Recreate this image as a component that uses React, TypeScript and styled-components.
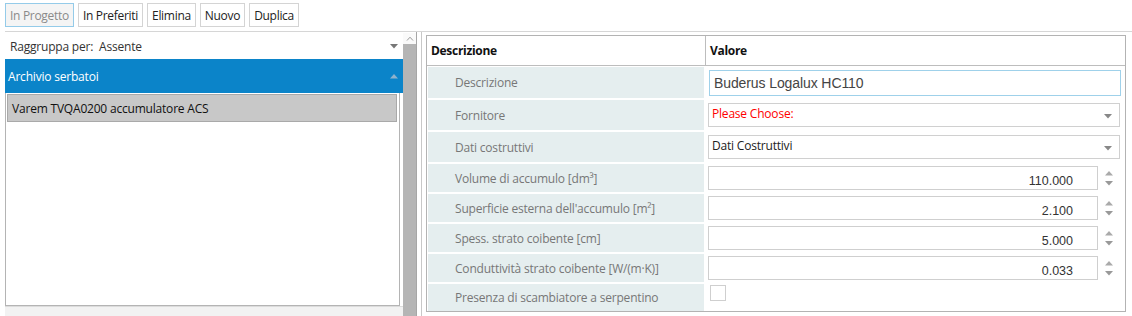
import React from 'react';
import styled, { createGlobalStyle } from 'styled-components';

const Global = createGlobalStyle`
  html, body { margin: 0; padding: 0; background: #fff; }
  body {
    font-family: "Open Sans", "Noto Sans", sans-serif;
    font-size: 12px;
    letter-spacing: -0.2px;
    color: #222;
  }
  * { box-sizing: border-box; }
`;

const Page = styled.div`
  width: 1132px;
  height: 316px;
  display: flex;
  flex-direction: column;
  overflow: hidden;
`;

const Toolbar = styled.div`
  display: flex;
  gap: 4px;
  height: 31px;
  padding: 3px 0 0 5px;
`;

const ToolButton = styled.button<{ $active?: boolean }>`
  height: 24px;
  padding: 0 4px;
  font: inherit;
  letter-spacing: -0.3px;
  background: ${p => (p.$active ? '#f4f4f4' : '#fff')};
  border: 1px solid ${p => (p.$active ? '#94cbe9' : '#d4d4d4')};
  color: ${p => (p.$active ? '#8a8a8a' : '#222')};
  border-radius: 0;
  cursor: pointer;
`;

const Main = styled.div`
  flex: 1;
  min-height: 0;
  display: flex;
  margin-left: 5px;
  border-top: 1px solid #d6d6d6;
`;

const LeftPane = styled.div`
  width: 398px;
  display: flex;
  flex-direction: column;
  padding-top: 1px;
`;

const GroupSelect = styled.div`
  height: 26px;
  display: flex;
  align-items: center;
  justify-content: space-between;
  padding: 0 5px 0 4px;
  margin-left: 1px;
  background: #fff;
  color: #333;
`;

const GroupHeader = styled.div`
  height: 34px;
  display: flex;
  align-items: center;
  justify-content: space-between;
  padding: 0 5px 0 3px;
  background: #0b84c9;
  color: #fff;
`;

const ListArea = styled.div`
  flex: 1;
  margin-right: 3px;
  padding: 1px;
  border: 1px solid #b4b4b4;
  border-top: none;
  background: #fff;
`;

const ListItem = styled.div`
  height: 28px;
  display: flex;
  align-items: center;
  padding-left: 4px;
  margin-right: 1px;
  background: #c8c8c8;
  border: 1px solid #a9a9a9;
  color: #111;
`;

const ListFooter = styled.div`
  height: 10px;
  background: #f2f2f2;
  border-top: 1px solid #dcdcdc;
`;

const Scrollbar = styled.div`
  width: 13px;
  display: flex;
  flex-direction: column;
  padding-top: 1px;
`;

const ScrollUp = styled.div`
  height: 11px;
  display: flex;
  align-items: center;
  justify-content: center;
  background: #fafafa;
`;

const ScrollThumb = styled.div`
  flex: 1;
  background: #b5b5b5;
`;

const Splitter = styled.div`
  width: 10px;
  border-left: 1px solid #a6a6a6;
  background: linear-gradient(to right, transparent 4px, #c8c8c8 4px, #c8c8c8 5px, transparent 5px);
`;

const RightPane = styled.div`
  width: 700px;
  margin: 3px 0 4px;
  border: 1px solid #b3b3b3;
  display: flex;
  flex-direction: column;
`;

const HeaderRow = styled.div`
  height: 30px;
  display: flex;
  border-bottom: 1px solid #bdbdbd;
`;

const HeaderCell = styled.div<{ $first?: boolean }>`
  width: ${p => (p.$first ? '279px' : 'auto')};
  flex: ${p => (p.$first ? 'none' : '1')};
  display: flex;
  align-items: center;
  padding-left: 4px;
  font-weight: 700;
  letter-spacing: -0.3px;
  color: #111;
  border-right: ${p => (p.$first ? '1px solid #bdbdbd' : 'none')};
`;

const Rows = styled.div`
  display: flex;
  flex-direction: column;
  gap: 2px;
  padding: 1px 1px 0;
`;

const Row = styled.div<{ $h: number }>`
  height: ${p => p.$h}px;
  display: flex;
`;

const LabelCell = styled.div`
  width: 276px;
  display: flex;
  align-items: center;
  padding-left: 27px;
  background: #e5eeef;
  color: #777;
`;

const ValueCell = styled.div<{ $top?: boolean }>`
  flex: 1;
  display: flex;
  align-items: ${p => (p.$top ? 'flex-start' : 'center')};
  padding: 0 3px 0 4px;
`;

const TextInput = styled.div`
  flex: 1;
  height: 26px;
  margin-left: 1px;
  display: flex;
  align-items: center;
  padding-left: 4px;
  border: 1px solid #9fd1ea;
  font-family: "Liberation Sans", Arial, sans-serif;
  font-size: 14px;
  letter-spacing: -0.1px;
  color: #444;
`;

const SelectBox = styled.div<{ $placeholder?: boolean }>`
  flex: 1;
  height: 24px;
  margin-right: 1px;
  display: flex;
  align-items: flex-start;
  justify-content: space-between;
  padding: 1px 7px 0 3px;
  border: 1px solid #d0d0d0;
  color: ${p => (p.$placeholder ? '#ff0000' : '#222')};
`;

const Caret = styled.span`
  align-self: center;
  display: flex;
  margin-top: 2px;
`;

const NumberWrap = styled.div`
  flex: 1;
  display: flex;
  align-items: center;
  gap: 3px;
  margin-right: 4px;
`;

const NumberInput = styled.div`
  flex: 1;
  height: 24px;
  display: flex;
  align-items: flex-end;
  justify-content: flex-end;
  padding: 0 24px 0 0;
  border: 1px solid #cfcfcf;
  font-family: "Liberation Sans", Arial, sans-serif;
  font-size: 12.5px;
  letter-spacing: 0;
  line-height: 15px;
  color: #333;
`;

const Spinner = styled.div`
  width: 16px;
  display: flex;
  flex-direction: column;
  align-items: center;
  gap: 5px;
`;

const CheckBox = styled.div`
  width: 16px;
  height: 16px;
  margin: 1px 0 0 2px;
  border: 1px solid #cfcfcf;
  background: #fff;
`;

const Down = ({ color = '#777' }: { color?: string }) => (
  <svg width="8" height="5" viewBox="0 0 8 5"><path d="M0 0 H8 L4 4.5 Z" fill={color} /></svg>
);
const Up = ({ color = '#777' }: { color?: string }) => (
  <svg width="8" height="5" viewBox="0 0 8 5"><path d="M0 4.5 H8 L4 0 Z" fill={color} /></svg>
);
const Chevron = () => (
  <svg width="8" height="5" viewBox="0 0 8 5"><path d="M1 4.5 L4 1.2 L7 4.5" fill="none" stroke="#9a9a9a" strokeWidth="1" /></svg>
);

type Field =
  | { kind: 'text'; label: string; value: string; h: number }
  | { kind: 'select'; label: string; value: string; placeholder?: boolean; h: number }
  | { kind: 'number'; label: string; value: string; h: number }
  | { kind: 'check'; label: string; h: number };

const fields: Field[] = [
  { kind: 'text', label: 'Descrizione', value: 'Buderus Logalux HC110', h: 31 },
  { kind: 'select', label: 'Fornitore', value: 'Please Choose:', placeholder: true, h: 30 },
  { kind: 'select', label: 'Dati costruttivi', value: 'Dati Costruttivi', h: 30 },
  { kind: 'number', label: 'Volume di accumulo [dm³]', value: '110.000', h: 28 },
  { kind: 'number', label: "Superficie esterna dell'accumulo [m²]", value: '2.100', h: 28 },
  { kind: 'number', label: 'Spess. strato coibente [cm]', value: '5.000', h: 28 },
  { kind: 'number', label: 'Conduttività strato coibente [W/(m·K)]', value: '0.033', h: 28 },
  { kind: 'check', label: 'Presenza di scambiatore a serpentino', h: 27 },
];

const renderValue = (f: Field) => {
  switch (f.kind) {
    case 'text':
      return <TextInput>{f.value}</TextInput>;
    case 'select':
      return (
        <SelectBox $placeholder={f.placeholder}>
          <span>{f.value}</span>
          <Caret><Down color="#888" /></Caret>
        </SelectBox>
      );
    case 'number':
      return (
        <NumberWrap>
          <NumberInput>{f.value}</NumberInput>
          <Spinner>
            <Up color="#aaa" />
            <Down color="#999" />
          </Spinner>
        </NumberWrap>
      );
    case 'check':
      return <CheckBox />;
  }
};

export default function App() {
  return (
    <Page>
      <Global />
      <Toolbar>
        <ToolButton $active>In Progetto</ToolButton>
        <ToolButton>In Preferiti</ToolButton>
        <ToolButton>Elimina</ToolButton>
        <ToolButton>Nuovo</ToolButton>
        <ToolButton>Duplica</ToolButton>
      </Toolbar>
      <Main>
        <LeftPane>
          <GroupSelect>
            <span>Raggruppa per:&nbsp; Assente</span>
            <Down color="#777" />
          </GroupSelect>
          <GroupHeader>
            <span>Archivio serbatoi</span>
            <Up color="#8fb2cc" />
          </GroupHeader>
          <ListArea>
            <ListItem>Varem TVQA0200 accumulatore ACS</ListItem>
          </ListArea>
          <ListFooter />
        </LeftPane>
        <Scrollbar>
          <ScrollUp><Chevron /></ScrollUp>
          <ScrollThumb />
        </Scrollbar>
        <Splitter />
        <RightPane>
          <HeaderRow>
            <HeaderCell $first>Descrizione</HeaderCell>
            <HeaderCell>Valore</HeaderCell>
          </HeaderRow>
          <Rows>
            {fields.map(f => (
              <Row key={f.label} $h={f.h}>
                <LabelCell>{f.label}</LabelCell>
                <ValueCell $top={f.kind === 'check'}>{renderValue(f)}</ValueCell>
              </Row>
            ))}
          </Rows>
        </RightPane>
      </Main>
    </Page>
  );
}
